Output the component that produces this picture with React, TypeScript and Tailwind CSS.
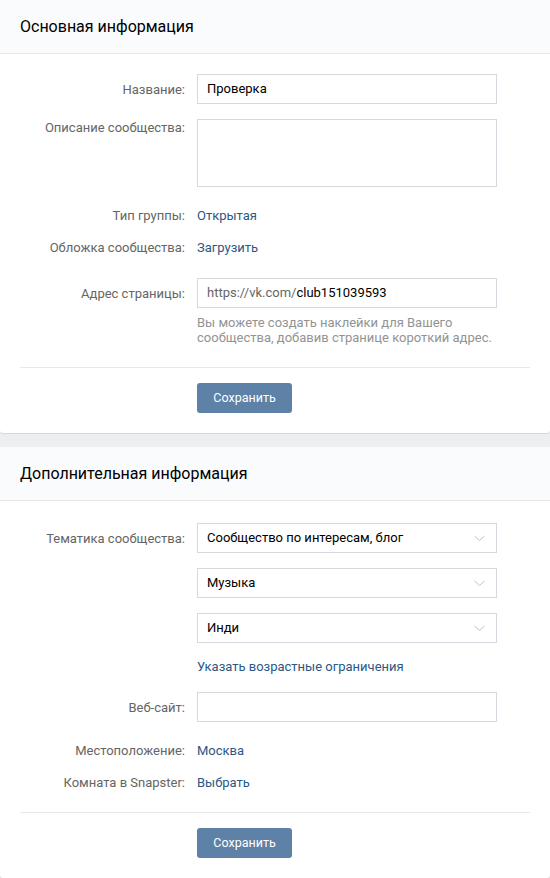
import type { ReactNode } from "react";

function Chevron() {
  return (
    <svg width="11" height="7" viewBox="0 0 11 7" className="absolute right-[11px] top-[11px]">
      <path d="M0.5 1 L5.5 5.5 L10.5 1" fill="none" stroke="#bcc2c9" strokeWidth="1" />
    </svg>
  );
}

function Row({ label, children, className = "" }: { label?: string; children: ReactNode; className?: string }) {
  return (
    <div className={`flex ${className}`}>
      <div className="w-[165px] shrink-0 text-right text-[13px] leading-[17px] text-[#656565]">{label}</div>
      <div className="ml-[12px] w-[300px]">{children}</div>
    </div>
  );
}

function Input({ value, children }: { value?: string; children?: ReactNode }) {
  return (
    <div className="h-[30px] border border-[#d3d9de] bg-white pl-[9px] text-[13px] leading-[28px] text-black">
      {children ?? value}
    </div>
  );
}

function Select({ value }: { value: string }) {
  return (
    <div className="relative h-[30px] border border-[#d3d9de] bg-white pl-[9px] text-[13px] leading-[28px] text-black">
      {value}
      <Chevron />
    </div>
  );
}

function SaveButton() {
  return (
    <div className="ml-[177px] mt-[15px]">
      <button className="h-[30px] w-[95px] rounded-[3px] bg-[#5e81a8] text-[12.5px] text-white">Сохранить</button>
    </div>
  );
}

function Card({ title, children, top = "pt-[20px]" }: { title: string; children: ReactNode; top?: string }) {
  return (
    <div className="rounded-[3px] bg-white shadow-[0_1px_0_0_#d7d8db]">
      <div className="h-[54px] border-b border-[#e7e8ec] bg-[#fafbfc] px-[20px] text-[16px] leading-[53px] text-[#000]">
        {title}
      </div>
      <div className={`px-[20px] pb-[20px] ${top}`}>{children}</div>
    </div>
  );
}

export default function App() {
  return (
    <div className="min-h-[878px] bg-[#edeef0] font-['Roboto',sans-serif]">
      <Card title="Основная информация">
        <Row label="Название:" className="items-center">
          <Input value="Проверка" />
        </Row>
        <Row label="Описание сообщества:" className="mt-[15px]">
          <div className="h-[68px] border border-[#d3d9de] bg-white" />
        </Row>
        <Row label="Тип группы:" className="mt-[20px]">
          <div className="text-[13px] leading-[17px] text-[#2a5885]">Открытая</div>
        </Row>
        <Row label="Обложка сообщества:" className="mt-[15px]">
          <div className="text-[13px] leading-[17px] text-[#2a5885]">Загрузить</div>
        </Row>
        <Row label="Адрес страницы:" className="mt-[22px] items-center">
          <Input>
            <span className="text-[#656565]">https://vk.com/</span>
            <span>club151039593</span>
          </Input>
        </Row>
        <Row className="mt-[7px]">
          <div className="text-[13px] leading-[15px] text-[#939393]">
            Вы можете создать наклейки для Вашего
            <br />
            сообщества, добавив странице короткий адрес.
          </div>
        </Row>
        <div className="mt-[22px] border-t border-[#e7e8ec]" />
        <SaveButton />
      </Card>

      <div className="h-[14px]" />

      <Card title="Дополнительная информация" top="pt-[22px]">
        <Row label="Тематика сообщества:" className="items-center">
          <Select value="Сообщество по интересам, блог" />
        </Row>
        <Row className="mt-[15px]">
          <Select value="Музыка" />
        </Row>
        <Row className="mt-[15px]">
          <Select value="Инди" />
        </Row>
        <Row className="mt-[15px]">
          <div className="text-[13px] leading-[17px] text-[#2a5885]">Указать возрастные ограничения</div>
        </Row>
        <Row label="Веб-сайт:" className="mt-[17px] items-center">
          <Input value="" />
        </Row>
        <Row label="Местоположение:" className="mt-[20px]">
          <div className="text-[13px] leading-[17px] text-[#2a5885]">Москва</div>
        </Row>
        <Row label="Комната в Snapster:" className="mt-[15px]">
          <div className="text-[13px] leading-[17px] text-[#2a5885]">Выбрать</div>
        </Row>
        <div className="mt-[21px] border-t border-[#e7e8ec]" />
        <SaveButton />
      </Card>
    </div>
  );
}
